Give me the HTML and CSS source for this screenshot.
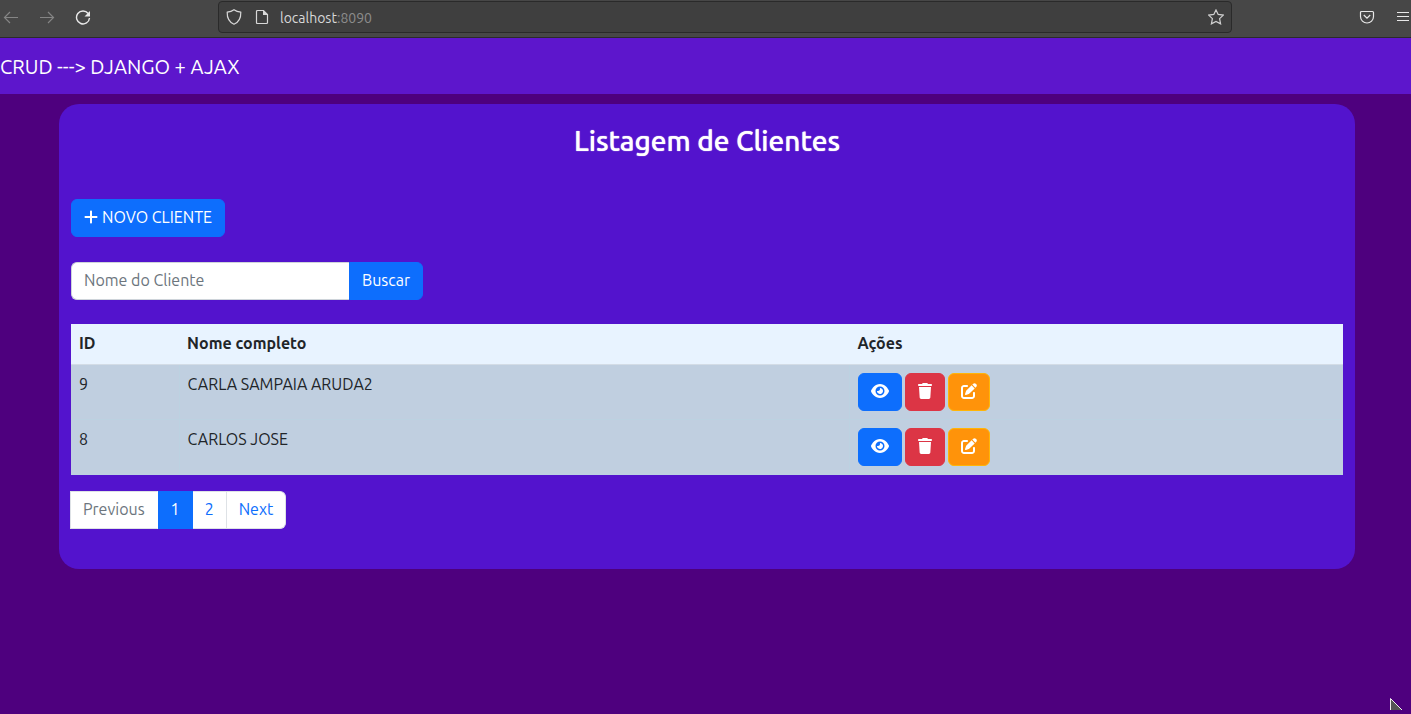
FILE: index.html
```html
<!DOCTYPE html>
<html lang="pt-br">
<head>
<meta charset="utf-8">
<title>Listagem de Clientes</title>
<link rel="stylesheet" href="styles.css">
</head>
<body>
<svg class="defs" aria-hidden="true">
  <symbol id="eye" viewBox="0 0 576 512"><path d="M288 32c-80.8 0-145.5 36.8-192.6 80.6C48.6 156 17.3 208 2.5 243.7c-3.3 7.9-3.3 16.7 0 24.6C17.3 304 48.6 356 95.4 399.4C142.5 443.2 207.2 480 288 480s145.5-36.8 192.6-80.6c46.8-43.5 78.1-95.4 93-131.1c3.3-7.9 3.3-16.7 0-24.6c-14.9-35.7-46.2-87.7-93-131.1C433.5 68.8 368.8 32 288 32zM144 256a144 144 0 1 1 288 0 144 144 0 1 1 -288 0zm144-64c0 35.3-28.7 64-64 64c-7.1 0-13.9-1.2-20.3-3.3c-5.5-1.8-11.9 1.6-11.7 7.4c.3 6.9 1.3 13.8 3.2 20.7c13.7 51.2 66.4 81.6 117.6 67.9s81.6-66.4 67.9-117.6c-11.1-41.5-47.8-69.4-88.6-71.1c-5.8-.2-9.2 6.1-7.4 11.7c2.1 6.4 3.3 13.2 3.3 20.3z"/></symbol>
  <symbol id="trash" viewBox="0 0 448 512"><path d="M135.2 17.7L128 32H32C14.3 32 0 46.3 0 64S14.3 96 32 96H416c17.7 0 32-14.3 32-32s-14.3-32-32-32H320l-7.2-14.3C307.4 6.8 296.3 0 284.2 0H163.8c-12.1 0-23.2 6.8-28.6 17.7zM416 128H32L53.2 467c1.6 25.3 22.6 45 47.9 45H346.9c25.3 0 46.3-19.7 47.9-45L416 128z"/></symbol>
  <symbol id="edit" viewBox="0 0 512 512"><path d="M471.6 21.7c-21.9-21.9-57.3-21.9-79.2 0L362.3 51.7l97.9 97.9 30.1-30.1c21.9-21.9 21.9-57.3 0-79.2L471.6 21.7zm-299.2 220c-6.1 6.1-10.8 13.6-13.5 21.9l-29.6 88.8c-2.9 8.6-.6 18.1 5.8 24.6s15.9 8.7 24.6 5.8l88.8-29.6c8.2-2.7 15.7-7.4 21.9-13.5L437.7 172.3 339.7 74.3 172.4 241.7zM96 64C43 64 0 107 0 160V416c0 53 43 96 96 96H352c53 0 96-43 96-96V320c0-17.7-14.3-32-32-32s-32 14.3-32 32v96c0 17.7-14.3 32-32 32H96c-17.7 0-32-14.3-32-32V160c0-17.7 14.3-32 32-32h96c17.7 0 32-14.3 32-32s-14.3-32-32-32H96z"/></symbol>
</svg>

<header class="browser">
  <div class="nav-buttons">
    <button class="tool dim" aria-label="Voltar"><svg viewBox="0 0 16 16"><path class="medium" d="M15 8.500H1.500M7 3L1.500 8.500L7 14"/></svg></button>
    <button class="tool dim" aria-label="Avançar"><svg viewBox="0 0 16 16"><path class="medium" d="M1 8.500h13.500M9 3L14.500 8.500L9 14"/></svg></button>
    <button class="tool" aria-label="Recarregar"><svg viewBox="0 0 16 16"><path class="bold" d="M13.200 4.500A6.500 6.500 0 1 0 14.500 9"/><path class="solid" d="M15 2v5.500H9.500z"/></svg></button>
  </div>
  <div class="urlbar">
    <svg class="shield" viewBox="0 0 16 16"><path class="medium" d="M8 .8C6 2.200 3.700 2.900 1.200 3.200C1 8.800 3 13 8 15.200C13 13 15 8.800 14.800 3.200C12.300 2.900 10 2.200 8 .8z"/></svg>
    <svg viewBox="0 0 16 16"><path class="medium" d="M3.500 1.500H9.500L13.500 5.500V13.500Q13.500 14.500 12.500 14.500H3.500Q2.500 14.500 2.500 13.500V2.500Q2.500 1.500 3.500 1.500z"/><path class="solid" d="M9 1l5 5H9z"/></svg>
    <span class="url">localhost<span class="port">:8090</span></span>
    <button class="tool star" aria-label="Favoritar"><svg viewBox="0 0 16 16"><path class="medium" d="M8 .9L10.200 5.400L15.300 6.100L11.600 9.600L12.600 14.900L8 12.400L3.400 14.900L4.400 9.600L.7 6.100L5.800 5.400z"/></svg></button>
  </div>
  <div class="menu-buttons">
    <button class="tool" aria-label="Pocket"><svg viewBox="0 0 16 16"><path class="medium" d="M2.500 2.500h11Q14.500 2.500 14.500 3.500V7.500A6.500 6.500 0 0 1 1.500 7.500V3.500Q1.500 2.500 2.500 2.500zM4.800 6L8 9.200L11.200 6"/></svg></button>
    <button class="tool" aria-label="Menu"><svg viewBox="0 0 16 16"><path class="medium" d="M2 3.500h12M2 7.500h12M2 11.500h12"/></svg></button>
  </div>
</header>

<nav class="navbar"><a class="brand" href="#">CRUD ---&gt; DJANGO + AJAX</a></nav>

<main class="page">
  <section class="card">
    <h1 class="title">Listagem de Clientes</h1>
    <button class="btn new"><svg viewBox="0 0 448 512"><path d="M256 80c0-17.700-14.300-32-32-32s-32 14.300-32 32V224H48c-17.700 0-32 14.300-32 32s14.300 32 32 32H192V432c0 17.700 14.300 32 32 32s32-14.300 32-32V288H400c17.700 0 32-14.300 32-32s-14.300-32-32-32H256V80z"/></svg>NOVO CLIENTE</button>
    <form class="search">
      <input class="field" type="text" placeholder="Nome do Cliente" aria-label="Nome do Cliente">
      <button class="btn submit" type="button">Buscar</button>
    </form>
    <table class="clients">
      <thead><tr><th class="col-id">ID</th><th class="col-name">Nome completo</th><th>Ações</th></tr></thead>
      <tbody>
        <tr><td>9</td><td>CARLA SAMPAIA ARUDA2</td><td><div class="actions">
          <button class="btn" aria-label="Ver"><svg class="eye"><use href="#eye"/></svg></button>
          <button class="btn danger" aria-label="Excluir"><svg class="trash"><use href="#trash"/></svg></button>
          <button class="btn warning" aria-label="Editar"><svg class="edit"><use href="#edit"/></svg></button></div></td></tr>
        <tr><td>8</td><td>CARLOS JOSE</td><td><div class="actions">
          <button class="btn" aria-label="Ver"><svg class="eye"><use href="#eye"/></svg></button>
          <button class="btn danger" aria-label="Excluir"><svg class="trash"><use href="#trash"/></svg></button>
          <button class="btn warning" aria-label="Editar"><svg class="edit"><use href="#edit"/></svg></button></div></td></tr>
      </tbody>
    </table>
    <nav class="pagination" aria-label="Paginação">
      <a class="page-link disabled">Previous</a>
      <a class="page-link active" href="#">1</a>
      <a class="page-link" href="#">2</a>
      <a class="page-link" href="#">Next</a>
    </nav>
  </section>
</main>
<svg class="pointer" viewBox="0 0 12 12" aria-hidden="true"><path d="M.5 12V.5L12 12"/></svg>
</body>
</html>
```
FILE: styles.css
```css
* { box-sizing: border-box; }
body {
  margin: 0;
  min-height: 100vh;
  background: #4e007e;
  color: #212529;
  font: 16px/24px Ubuntu, "Noto Sans", sans-serif;
}
button, input { font: inherit; }
a { text-decoration: none; }
.defs { display: none; }

.browser {
  display: flex;
  height: 38px;
  padding: 1px 0 4px;
  background: #474747;
  border-bottom: 1px solid #2b2b2b;
}
.nav-buttons { display: flex; align-items: center; gap: 20px; width: 218px; padding-left: 3px; }
.menu-buttons { display: flex; align-items: center; justify-content: flex-end; gap: 20px; width: 179px; }
.tool { display: flex; padding: 0; border: 0; background: none; color: #e8e8e8; }
.tool.dim { color: #858585; }
.browser svg { width: 16px; height: 16px; fill: none; stroke: currentColor; stroke-width: 1; flex: none; }
.browser .medium { stroke-width: 1.2; }
.browser .bold { stroke-width: 1.4; }
.browser .solid { fill: currentColor; stroke: none; }
.urlbar {
  flex: 1;
  display: flex;
  align-items: center;
  gap: 10px;
  height: 32px;
  padding: 0 7px;
  background: #3f3f3f;
  border: 1px solid #2a2a2a;
  border-radius: 4px;
  color: #d8d8d8;
  font-size: 14px;
}
.shield { margin-right: 2px; }
.url { padding-top: 2px; }
.port { color: #8c8c8c; }
.star { margin-left: auto; color: #d0d0d0; }

.navbar { display: flex; align-items: center; height: 56px; padding-top: 2px; background: #5d16cc; }
.brand { color: #fff; font-size: 20px; line-height: 30px; }

.page { padding: 10px 56px 24px 59px; }
.card { padding: 20px 12px 40px; background: #5313cd; border-radius: 20px; }
.title {
  margin: 0 0 41px;
  color: #fff;
  font-size: 28px;
  line-height: 34px;
  font-weight: 500;
  text-align: center;
  text-shadow: 0 0 1px #fff;
}

.btn {
  display: inline-flex;
  align-items: center;
  height: 38px;
  padding: 0 12px 2px;
  border: 1px solid #0d6efd;
  border-radius: 6px;
  background: #0d6efd;
  color: #fff;
}
.btn svg { fill: currentColor; height: 16px; }
.new svg { width: 14px; margin-right: 4px; }
.danger { background: #dc3545; border-color: #dc3545; }
.warning { background: #ff930a; border-color: #ffb507; }
.eye { width: 18px; }
.trash { width: 14px; }
.edit { width: 16px; }

.search { display: flex; width: 352px; margin: 25px 0 24px; }
.field {
  flex: 1;
  min-width: 0;
  height: 38px;
  padding: 0 12px 2px;
  border: 1px solid #ced4da;
  border-right: 0;
  border-radius: 6px 0 0 6px;
  background: #fff;
}
.field::placeholder { color: #6c757d; opacity: 1; }
.submit { border-radius: 0 6px 6px 0; }

.clients { width: 100%; border-collapse: collapse; table-layout: fixed; }
.clients th, .clients td { padding: 7px 8px 8px; text-align: left; vertical-align: top; }
.clients th { padding-bottom: 9px; background: #e8f3ff; border-bottom: 1px solid #d3dce6; }
.clients td { background: #c0cfe0; border-bottom: 1px solid #bcd2e1; }
.clients td + td { border-left: 1px solid #bcd2e1; }
.col-id { width: 8.5%; }
.col-name { width: 52.7%; }
.actions { display: flex; gap: 3px; padding-top: 1px; }

.pagination { display: flex; margin: 16px 0 0 -1px; }
.page-link {
  padding: 5px 12px 7px;
  background: #fff;
  border: 1px solid #dee2e6;
  border-left-width: 0;
  color: #0d6efd;
}
.page-link:first-child { border-left-width: 1px; }
.page-link:last-child { border-radius: 0 6px 6px 0; }
.disabled { color: #6c757d; border-right-color: #fff; }
.active { background: #0d6efd; border: 1px solid #0d6efd; color: #fff; }

.pointer { position: fixed; right: 9px; bottom: 4px; width: 12px; height: 12px; fill: #555; stroke: #eee; }
```
